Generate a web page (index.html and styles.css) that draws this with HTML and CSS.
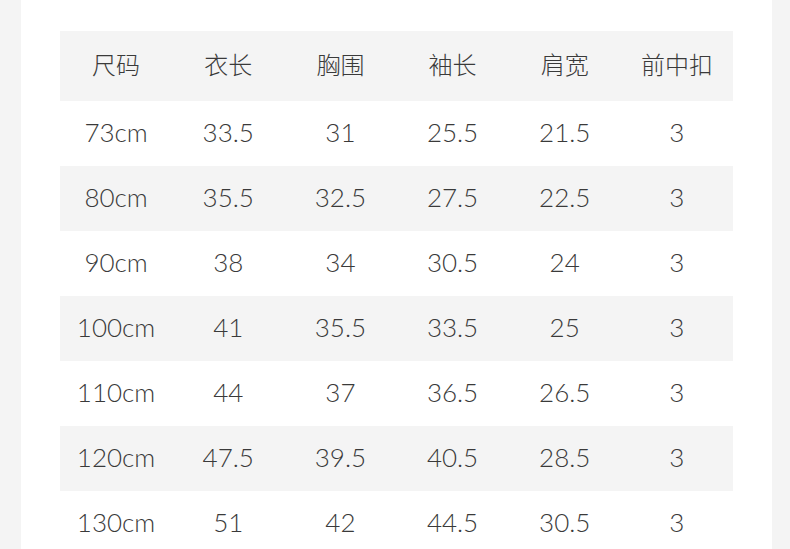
FILE: index.html
```html
<!DOCTYPE html>
<html lang="zh">
<head>
<meta charset="utf-8">
<link rel="stylesheet" href="styles.css">
</head>
<body>
<div class="panel">
  <table class="size-table">
    <thead>
      <tr><th>尺码</th><th>衣长</th><th>胸围</th><th>袖长</th><th>肩宽</th><th>前中扣</th></tr>
    </thead>
    <tbody>
      <tr><td>73cm</td><td>33.5</td><td>31</td><td>25.5</td><td>21.5</td><td>3</td></tr>
      <tr class="alt"><td>80cm</td><td>35.5</td><td>32.5</td><td>27.5</td><td>22.5</td><td>3</td></tr>
      <tr><td>90cm</td><td>38</td><td>34</td><td>30.5</td><td>24</td><td>3</td></tr>
      <tr class="alt"><td>100cm</td><td>41</td><td>35.5</td><td>33.5</td><td>25</td><td>3</td></tr>
      <tr><td>110cm</td><td>44</td><td>37</td><td>36.5</td><td>26.5</td><td>3</td></tr>
      <tr class="alt"><td>120cm</td><td>47.5</td><td>39.5</td><td>40.5</td><td>28.5</td><td>3</td></tr>
      <tr><td>130cm</td><td>51</td><td>42</td><td>44.5</td><td>30.5</td><td>3</td></tr>
    </tbody>
  </table>
</div>
</body>
</html>
```
FILE: styles.css
```css
html, body {
  margin: 0;
  padding: 0;
  background: #f4f4f4;
  height: 100%;
  overflow: hidden;
}
.panel {
  margin-left: 21px;
  width: 751px;
  min-height: 100%;
  background: #ffffff;
  padding: 31px 0 0 39px;
  box-sizing: border-box;
}
.size-table {
  width: 673px;
  border-collapse: collapse;
  table-layout: fixed;
  color: #3a3a3a;
}
.size-table th {
  height: 70px;
  padding: 0 0 6px 0;
  box-sizing: border-box;
  background: #f4f4f4;
  font-family: "Noto Sans CJK SC", sans-serif;
  font-weight: 300;
  font-size: 24px;
  text-align: center;
  vertical-align: middle;
}
.size-table td {
  height: 65px;
  padding: 0 0 3px 0;
  box-sizing: border-box;
  font-family: "Lato", "Noto Sans CJK SC", sans-serif;
  font-weight: 300;
  font-size: 26px;
  text-align: center;
  vertical-align: middle;
}
.size-table tr.alt td {
  background: #f4f4f4;
}
```
